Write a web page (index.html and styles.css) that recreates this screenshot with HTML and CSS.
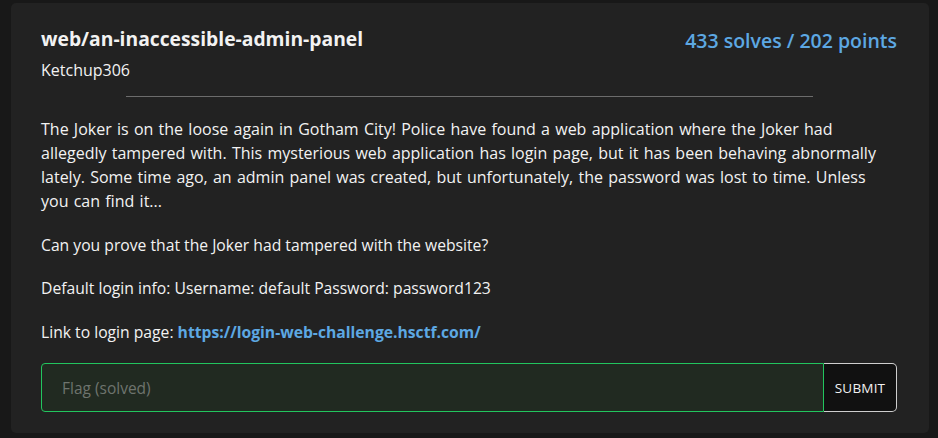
FILE: index.html
```html
<!DOCTYPE html>
<html>
<head>
<meta charset="utf-8">
<link rel="stylesheet" href="styles.css">
</head>
<body>
<div class="card">
  <div class="head">
    <div>
      <h1 class="title">web/an-inaccessible-admin-panel</h1>
      <div class="author">Ketchup306</div>
    </div>
    <div class="score">433 solves / 202 points</div>
  </div>
  <hr class="rule">
  <div class="desc">
    <p class="intro">The Joker is on the loose again in Gotham City! Police have found a web application where the Joker had allegedly tampered with. This mysterious web application has login page, but it has been behaving abnormally lately. Some time ago, an admin panel was created, but unfortunately, the password was lost to time. Unless you can find it...</p>
    <p>Can you prove that the Joker had tampered with the website?</p>
    <p>Default login info: Username: default Password: password123</p>
    <p>Link to login page: <a class="link" href="#">https://login-web-challenge.hsctf.com/</a></p>
  </div>
  <form class="flag">
    <input class="flag-input" type="text" placeholder="Flag (solved)">
    <button class="submit" type="button">SUBMIT</button>
  </form>
</div>
</body>
</html>
```
FILE: styles.css
```css
html, body {
  margin: 0;
  padding: 0;
  background: #181818;
}
body {
  font-family: "Open Sans", Lato, sans-serif;
  color: #f2f2f2;
  padding: 3px 9px 0 11px;
}
.card {
  background: #222222;
  border-radius: 5px;
  padding: 22px 32px 21px 30px;
  width: 856px;
}
.head {
  display: flex;
  justify-content: space-between;
  align-items: flex-start;
}
.title {
  margin: 0;
  font-size: 19.3px;
  font-weight: 700;
  line-height: 28px;
}
.author {
  margin-top: 6px;
  font-size: 16px;
  line-height: 22px;
}
.score {
  color: #5da8e3;
  font-size: 19.5px;
  font-weight: 600;
  line-height: 30px;
  margin-top: 1px;
}
.rule {
  border: 0;
  border-top: 1px solid #6c6c6c;
  width: 687px;
  margin: 15px auto 20px;
}
.desc {
  font-size: 15.7px;
  line-height: 24px;
}
.desc p {
  margin: 0 0 19.5px;
}
.desc .intro {
  font-size: 16px;
  word-spacing: 1.1px;
  max-width: 850px;
}
.link {
  color: #5da8e3;
  font-weight: 700;
  text-decoration: none;
}
.flag {
  display: flex;
  margin-top: 0;
}
.flag-input {
  flex: 1;
  height: 49px;
  box-sizing: border-box;
  background: #212a21;
  border: 1px solid #22c55e;
  border-radius: 4px 0 0 4px;
  padding: 0 20px;
  font-family: inherit;
  font-size: 15.5px;
  color: #eee;
  outline: none;
}
.flag-input::placeholder {
  color: #6e746e;
}
.submit {
  width: 73px;
  height: 49px;
  box-sizing: border-box;
  background: #111111;
  border: 1px solid #cfcfcf;
  border-left: 0;
  border-radius: 0 5px 5px 0;
  color: #f2f2f2;
  font-family: inherit;
  font-size: 13.5px;
  letter-spacing: 0.2px;
  padding: 0;
}
```
